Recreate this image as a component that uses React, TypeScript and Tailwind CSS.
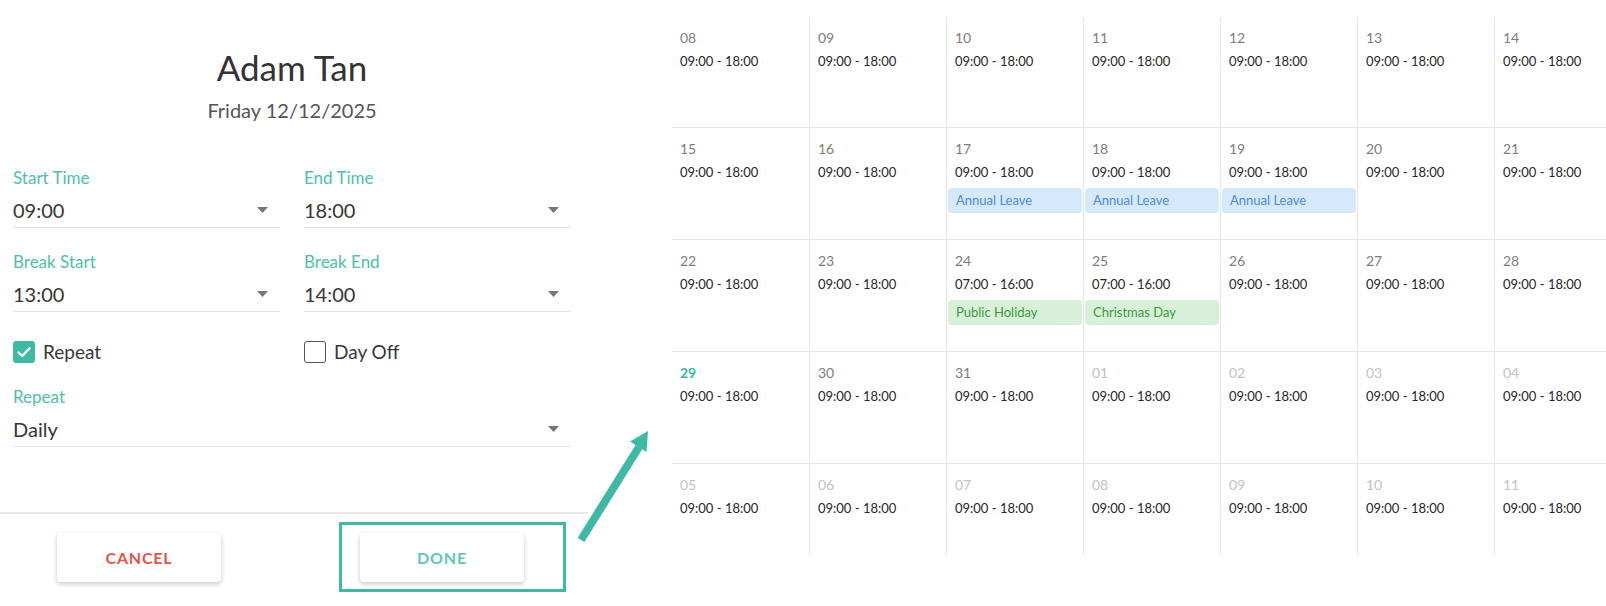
import React from "react";

const FONT = { fontFamily: "Lato, 'Noto Sans', sans-serif" };

function Caret() {
  return (
    <svg width="11" height="6" viewBox="0 0 11 6" className="block">
      <path d="M0 0 L11 0 L5.5 6 Z" fill="#777" />
    </svg>
  );
}

function Field({ label, value, className = "" }: { label: string; value: string; className?: string }) {
  return (
    <div className={"border-b border-[#e3e3e3] pb-[5px] " + className}>
      <div className="text-[17px] leading-[20px] text-[#4fc1a9]">{label}</div>
      <div className="mt-[10px] flex items-center justify-between pr-[12px]">
        <span className="text-[20px] leading-[24px] text-[#363636]">{value}</span>
        <Caret />
      </div>
    </div>
  );
}

function Checkbox({ checked, label }: { checked: boolean; label: string }) {
  return (
    <div className="flex items-center h-[23px]">
      {checked ? (
        <div className="w-[22px] h-[22px] rounded-[3px] bg-[#3dbaa3] flex items-center justify-center">
          <svg width="18" height="18" viewBox="0 0 18 18">
            <path d="M3.5 9.5 L7.2 13 L14.5 5.2" fill="none" stroke="#fff" strokeWidth="2.4" strokeLinecap="round" strokeLinejoin="round" />
          </svg>
        </div>
      ) : (
        <div className="w-[22px] h-[22px] rounded-[3px] border-[1.5px] border-[#555] bg-white" />
      )}
      <span className="ml-[8px] text-[19px] leading-[23px] text-[#383838]">{label}</span>
    </div>
  );
}

type Cell = { d: string; t?: string; kind?: "in" | "out" | "today"; badge?: { text: string; type: "blue" | "green" } };

const std = "09:00 - 18:00";
const rows: Cell[][] = [
  ["08", "09", "10", "11", "12", "13", "14"].map((d) => ({ d })),
  [
    { d: "15" },
    { d: "16" },
    { d: "17", badge: { text: "Annual Leave", type: "blue" } },
    { d: "18", badge: { text: "Annual Leave", type: "blue" } },
    { d: "19", badge: { text: "Annual Leave", type: "blue" } },
    { d: "20" },
    { d: "21" },
  ],
  [
    { d: "22" },
    { d: "23" },
    { d: "24", t: "07:00 - 16:00", badge: { text: "Public Holiday", type: "green" } },
    { d: "25", t: "07:00 - 16:00", badge: { text: "Christmas Day", type: "green" } },
    { d: "26" },
    { d: "27" },
    { d: "28" },
  ],
  [
    { d: "29", kind: "today" },
    { d: "30" },
    { d: "31" },
    { d: "01", kind: "out" },
    { d: "02", kind: "out" },
    { d: "03", kind: "out" },
    { d: "04", kind: "out" },
  ],
  ["05", "06", "07", "08", "09", "10", "11"].map((d) => ({ d, kind: "out" as const })),
];

function DayCell({ c, r, i }: { c: Cell; r: number; i: number }) {
  const numCls =
    c.kind === "today"
      ? "text-[#3db5a0] font-bold"
      : c.kind === "out"
      ? "text-[#c2c2c2]"
      : "text-[#7d7d7d]";
  return (
    <div className={(i > 0 ? "border-l " : "") + (r > 0 ? "border-t " : "") + "border-[#e6e6e6] pt-[12px]"}>
      <div className={"pl-[8px] text-[14px] leading-[17px] " + numCls}>{c.d}</div>
      <div className="pl-[8px] mt-[7px] text-[13px] leading-[16px] text-[#262626]">{c.t ?? std}</div>
      {c.badge && (
        <div
          className={
            "mt-[8px] mx-[1px] h-[25px] rounded-[4px] pl-[8px] text-[13px] leading-[25px] " +
            (c.badge.type === "blue" ? "bg-[#d5e8fc] text-[#4b8dd2]" : "bg-[#d7f0d7] text-[#3b9b3b]")
          }
        >
          {c.badge.text}
        </div>
      )}
    </div>
  );
}

export default function App() {
  return (
    <div className="relative w-[1606px] h-[606px] overflow-hidden bg-white flex" style={FONT}>
      {/* Left dialog */}
      <div className="w-[588px] shrink-0 flex flex-col">
        <div className="px-[13px] pt-[46px] w-[584px]">
          <div className="text-center text-[35px] leading-[42px] text-[#333]">Adam Tan</div>
          <div className="mt-[10px] text-center text-[20px] leading-[24px] text-[#555]">Friday 12/12/2025</div>

          <div className="mt-[46px] grid grid-cols-2 gap-x-[24px]">
            <Field label="Start Time" value="09:00" />
            <Field label="End Time" value="18:00" />
          </div>
          <div className="mt-[24px] grid grid-cols-2 gap-x-[24px]">
            <Field label="Break Start" value="13:00" />
            <Field label="Break End" value="14:00" />
          </div>
          <div className="mt-[28px] grid grid-cols-2 gap-x-[24px]">
            <Checkbox checked label="Repeat" />
            <Checkbox checked={false} label="Day Off" />
          </div>
          <Field className="mt-[24px]" label="Repeat" value="Daily" />
        </div>

        <div className="mt-[65px] h-[2px] bg-[#e8e8e8]" />

        <div className="mt-[19px] flex pl-[57px] gap-[139px]">
          <button className="w-[164px] h-[49px] rounded-[4px] bg-white shadow-[0_2px_5px_rgba(0,0,0,0.22)] text-[16px] font-bold tracking-[0.05em] text-[#e2554d]">
            CANCEL
          </button>
          <button className="w-[164px] h-[49px] rounded-[4px] bg-white shadow-[0_2px_5px_rgba(0,0,0,0.22)] text-[16px] font-bold tracking-[0.05em] text-[#62c6b3]">
            DONE
          </button>
        </div>
      </div>

      {/* Calendar */}
      <div className="ml-[84px] pt-[17px]">
        <div className="grid grid-cols-[repeat(7,137px)] grid-rows-[110px_112px_112px_112px_92px]">
          {rows.map((row, r) => row.map((c, i) => <DayCell key={r + "-" + i} c={c} r={r} i={i} />))}
        </div>
      </div>

      {/* Annotation: highlight box around DONE */}
      <div className="absolute left-[339px] top-[522px] w-[227px] h-[70px] border-[3px] border-[#3db9a5]" />

      {/* Annotation arrow */}
      <svg className="absolute left-[560px] top-[420px]" width="100" height="130" viewBox="0 0 100 130">
        <line x1="21" y1="120" x2="79" y2="27" stroke="#3db9a5" strokeWidth="8" />
        <path d="M88 11 L86.5 32 L70 21.5 Z" fill="#3db9a5" />
      </svg>
    </div>
  );
}
